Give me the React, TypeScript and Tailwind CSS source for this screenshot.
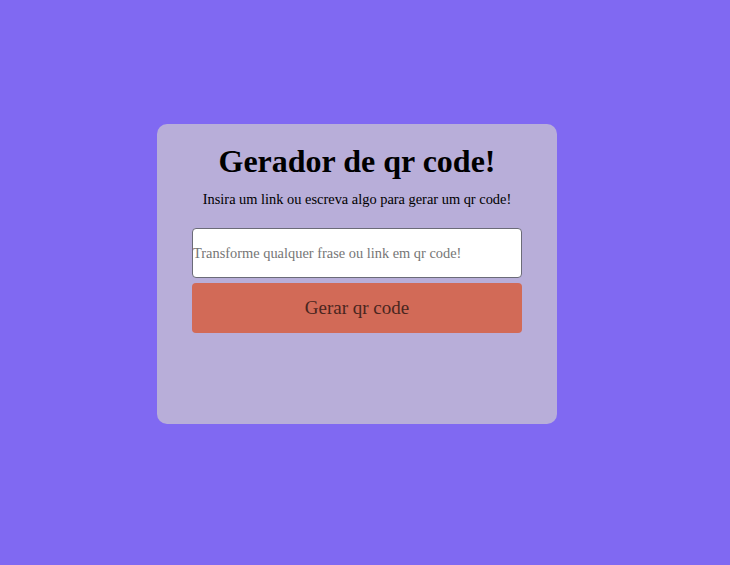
export default function App() {
  return (
    <div className="flex h-screen w-full items-center justify-center bg-[#8069f2] pb-[17px] pr-4 font-['Liberation_Serif',serif]">
      <div className="flex h-[300px] w-[400px] flex-col items-center rounded-[10px] bg-[#b8aed9] px-[35px] pt-[19px]">
        <h1 className="text-[32px] font-bold leading-[37px] text-black">Gerador de qr code!</h1>
        <p className="mt-[11px] text-[14.4px] leading-[17px] text-black">
          Insira um link ou escreva algo para gerar um qr code!
        </p>
        <input
          type="text"
          placeholder="Transforme qualquer frase ou link em qr code!"
          className="mt-[20px] h-[50px] w-[330px] rounded-[4px] border border-[#6b6b78] bg-white text-[14.4px] text-black outline-none placeholder:text-[#767676]"
        />
        <button className="mt-[5px] h-[50px] w-[330px] rounded-[4px] bg-[#d26a57] text-[19px] text-[#4a2620]">
          Gerar qr code
        </button>
      </div>
    </div>
  );
}
